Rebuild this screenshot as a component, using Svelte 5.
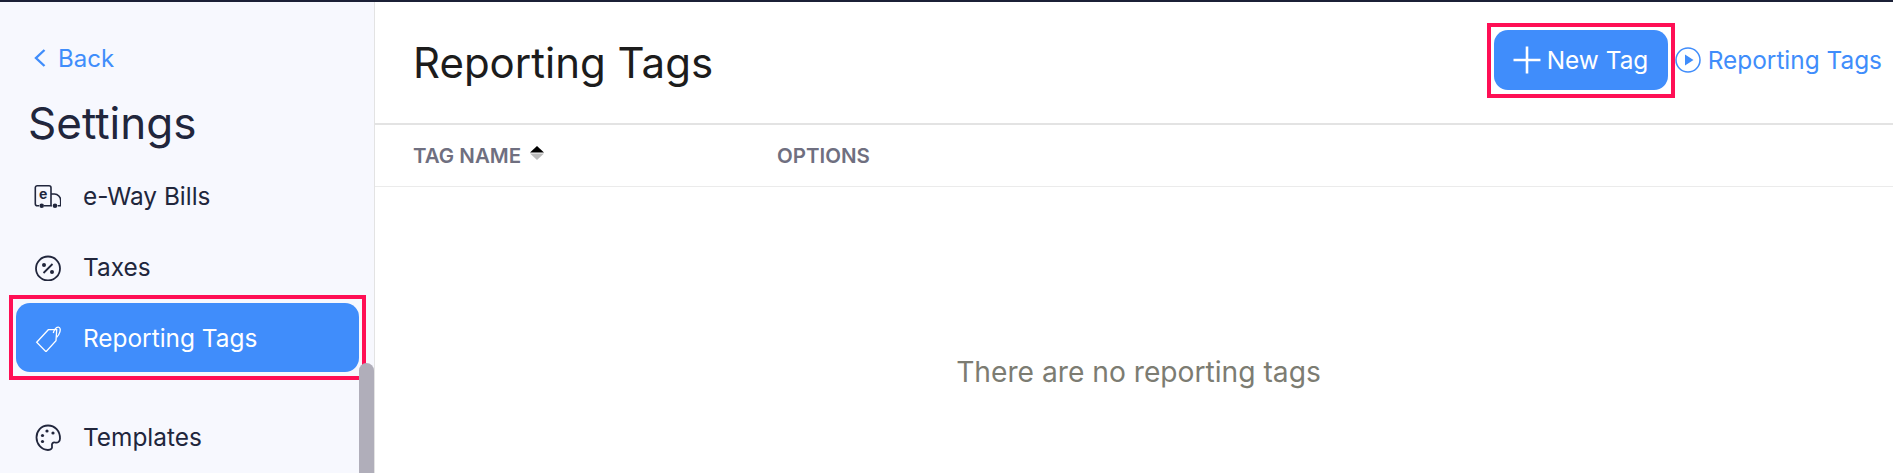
<script>
  const columns = ['OPTIONS'];
</script>

<div class="page">
  <aside class="sidebar">
    <a class="back" href="#back">
      <svg width="14" height="20" viewBox="0 0 14 20" fill="none" stroke="#408dfb" stroke-width="2.400"><path d="M11.500 2 3 10l8.500 8"/></svg>
      <span>Back</span>
    </a>
    <h2>Settings</h2>
    <nav>
      <div class="item first">
        <svg class="icon" viewBox="0 0 28 28" fill="none" stroke="#21263c" stroke-width="1.600">
          <path d="M6 23.700H4.300a2 2 0 0 1-2-2V5.700a2 2 0 0 1 2-2h11.700a2 2 0 0 1 2 2v18H11"/>
          <path d="M18 12h3.500c3.300 0 6.200 3 6.200 6.500v5.200h-3M19 23.700h-.5"/>
          <circle cx="8.700" cy="23.700" r="2.300" fill="#21263c" stroke="none"/>
          <circle cx="22" cy="23.700" r="2.300" fill="#21263c" stroke="none"/>
          <text x="10.200" y="17" text-anchor="middle" class="e-mark">e</text>
        </svg>
        <span>e-Way Bills</span>
      </div>
      <div class="item">
        <svg class="icon" viewBox="0 0 28 28" fill="none" stroke="#21263c" stroke-width="1.800">
          <circle cx="15" cy="15.500" r="12"/>
          <path d="M19.500 11 10.500 20"/>
          <circle cx="11" cy="12" r="2" fill="#21263c" stroke="none"/>
          <circle cx="19" cy="19" r="2" fill="#21263c" stroke="none"/>
        </svg>
        <span>Taxes</span>
      </div>
      <div class="mark mark-nav">
        <div class="item active">
          <svg class="icon" viewBox="0 0 28 28" fill="none" stroke="#fff" stroke-width="1.300">
            <path d="M3.700 18.300 15.300 5.700h8.400l-.7 11L13 27.700z"/>
            <path d="M20.300 9c.5-2.500 2.500-6 5-5.800 2.200.2 2.200 2.800 1.500 5-.5 1.800-1.800 3.800-3.100 5.100"/>
          </svg>
          <span>Reporting Tags</span>
        </div>
      </div>
      <div class="item later">
        <svg class="icon" viewBox="0 0 28 28" fill="none" stroke="#21263c" stroke-width="1.800">
          <path d="M15 2.500C8 2.500 3.500 8 3.500 14.500S8.500 27 15 27c3 0 4.500-1.500 4-4-.5-2.500 1-4 3-3.500 3 .7 5-1 5-4C27 8 22 2.500 15 2.500z"/>
          <circle cx="9.500" cy="12.500" r="1.600" fill="#21263c" stroke="none"/>
          <circle cx="14" cy="8" r="1.600" fill="#21263c" stroke="none"/>
          <circle cx="20" cy="10" r="1.600" fill="#21263c" stroke="none"/>
          <circle cx="9.500" cy="18.500" r="1.600" fill="#21263c" stroke="none"/>
        </svg>
        <span>Templates</span>
      </div>
    </nav>
    <div class="scroll-thumb"></div>
  </aside>

  <main class="content">
    <header class="head">
      <h1>Reporting Tags</h1>
      <div class="actions">
        <div class="mark mark-btn">
          <button type="button" class="new">
            <svg width="28" height="28" viewBox="0 0 28 28" stroke="#fff" stroke-width="2.600" fill="none"><path d="M14 .5v27M.5 14h27"/></svg>
            <span>New Tag</span>
          </button>
        </div>
        <a class="video" href="#video">
          <svg width="26" height="26" viewBox="0 0 26 26" fill="none"><circle cx="13" cy="13" r="12" stroke="#408dfb" stroke-width="1.500"/><path d="M10 7.500l8.500 5.500-8.500 5.500z" fill="#408dfb"/></svg>
          <span>Reporting Tags</span>
        </a>
      </div>
    </header>
    <div class="table-head">
      <div class="col-name">
        <span>TAG NAME</span>
        <svg width="14" height="14" viewBox="0 0 14 14"><path d="M7 0l7 6.500H0z" fill="#000"/><path d="M0 7.500h14L7 14z" fill="#bbb"/></svg>
      </div>
      {#each columns as c}<div>{c}</div>{/each}
    </div>
    <div class="empty">There are no reporting tags</div>
  </main>
</div>

<style>
  :global(body) { margin: 0; background: #fff; }
  .page {
    height: 471px;
    overflow: hidden;
    display: flex;
    border-top: 2px solid #1b2036;
    font-family: Inter, "Liberation Sans", sans-serif;
    color: #21263c;
  }
  .sidebar {
    position: relative;
    box-sizing: border-box;
    width: 375px;
    flex: none;
    background: #f7f8fe;
    border-right: 1px solid #e3e3e3;
    padding: 42px 15px 0 16px;
    overflow: hidden;
  }
  .back {
    display: flex;
    align-items: center;
    gap: 11px;
    height: 28px;
    padding-left: 17px;
    color: #408dfb;
    font-size: 24px;
    text-decoration: none;
  }
  h2 {
    margin: 23px 0 0 12px;
    font-size: 44px;
    line-height: 56px;
    font-weight: 400;
  }
  nav { margin-top: 10px; }
  .item {
    display: flex;
    align-items: center;
    gap: 22px;
    height: 69px;
    padding-left: 17px;
    border-radius: 14px;
    font-size: 24.400px;
  }
  .first { margin-bottom: 2px; }
  .icon { width: 28px; height: 28px; flex: none; }
  .e-mark { font: 700 14px Inter, sans-serif; fill: #21263c; stroke: none; }
  .mark {
    border: 4px solid #ff0f55;
    box-sizing: border-box;
  }
  .mark-nav {
    margin: -6px -7px -5px -7px;
    padding: 4px 3px 4px 3px;
  }
  .active {
    background: #408dfb;
    color: #fff;
  }
  .later { margin-top: 27px; }
  .scroll-thumb {
    position: absolute;
    left: 359px;
    right: 0;
    top: 361px;
    bottom: 0;
    background: #b0aeba;
    border-radius: 8px 8px 0 0;
  }
  .content { flex: 1; min-width: 0; }
  .head {
    box-sizing: border-box;
    height: 123px;
    display: flex;
    align-items: center;
    justify-content: space-between;
    padding: 0 11px 0 38px;
    border-bottom: 2px solid #e3e3e3;
  }
  h1 {
    margin: 0;
    font-size: 42px;
    font-weight: 400;
    color: #1c1c1c;
  }
  .actions { display: flex; align-items: center; gap: 0; margin-top: -5px; }
  .mark-btn { padding: 3.500px 3px 3.500px 3px; }
  .new {
    display: flex;
    align-items: center;
    gap: 6px;
    width: 174px;
    height: 60px;
    padding: 0 0 0 19px;
    border: 0;
    border-radius: 14px;
    background: #408dfb;
    color: #fff;
    font: 400 24.400px Inter, "Liberation Sans", sans-serif;
  }
  .video {
    display: flex;
    align-items: center;
    gap: 7px;
    color: #408dfb;
    font-size: 24.400px;
    text-decoration: none;
  }
  .table-head {
    box-sizing: border-box;
    height: 62px;
    display: grid;
    grid-template-columns: 364px 1fr;
    align-items: center;
    padding-left: 38px;
    border-bottom: 1px solid #ebebeb;
    color: #6f6f80;
    font-size: 20.500px;
    font-weight: 600;
  }
  .col-name { display: flex; align-items: center; gap: 9px; }
  .col-name svg { margin-top: -6px; }
  .empty {
    margin-top: 168px;
    padding-left: 9px;
    text-align: center;
    font-size: 28.200px;
    color: #7c7c72;
  }
</style>
